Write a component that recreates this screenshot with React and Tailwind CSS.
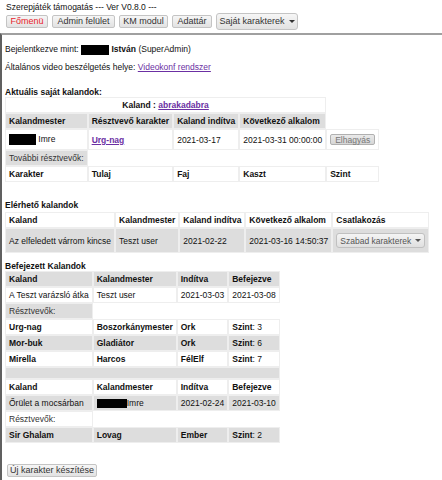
import React from "react";

const font = { fontFamily: '"Liberation Sans", Arial, sans-serif' };

function Btn({ children, className = "" }) {
  return (
    <button
      className={`flex items-center justify-center rounded-[2px] border border-[#c4c4c4] bg-gradient-to-b from-[#f6f6f6] to-[#e2e2e2] text-[9px] leading-none text-[#333] ${className}`}
    >
      {children}
    </button>
  );
}

function Caret() {
  return <span className="ml-[4px] inline-block h-0 w-0 border-x-[3px] border-t-[3px] border-x-transparent border-t-[#333]" />;
}

function Td({ children, className = "", ...rest }) {
  return (
    <td
      className={`border border-[#eeeeee] px-[3px] py-[2px] align-middle leading-[10px] whitespace-nowrap ${className}`}
      {...rest}
    >
      {children}
    </td>
  );
}

function Redacted({ className = "" }) {
  return <span className={`inline-block bg-black align-middle ${className}`} />;
}

function Link({ children, bold }) {
  return <a className={`text-[#6b2fa3] underline ${bold ? "font-bold" : ""}`}>{children}</a>;
}

export default function App() {
  return (
    <div style={font} className="w-[442px] h-[480px] overflow-hidden bg-white text-[8.5px] text-[#111]">
      <div className="pt-[2px] pl-[6px]">
        <div className="leading-[11px]">Szerepjáték támogatás --- Ver V0.8.0 ---</div>
        <div className="flex h-[17px] items-center gap-[4px]">
          <Btn className="h-[13px] w-[42px] !text-[#e8222b]">Főmenü</Btn>
          <Btn className="h-[13px] w-[63px]">Admin felület</Btn>
          <Btn className="h-[13px] w-[49px]">KM modul</Btn>
          <Btn className="h-[13px] w-[40px]">Adattár</Btn>
          <Btn className="h-[17px] w-[82px] rounded-[3px]">
            Saját karakterek
            <Caret />
          </Btn>
        </div>
      </div>

      <div className="mt-[3px] h-[450px] border-t-2 border-l-2 border-t-[#a0a0a0] border-l-[#606060] pl-[3px]">
        <p className="mt-[8px] leading-[12px]">
          Bejelentkezve mint: <Redacted className="h-[10px] w-[28px]" /> <b>István</b> (SuperAdmin)
        </p>
        <p className="mt-[6px] leading-[12px]">
          Általános video beszélgetés helye: <Link>Videokonf rendszer</Link>
        </p>

        <div className="mt-[14px] font-bold leading-[10px]">Aktuális saját kalandok:</div>
        <table className="w-[370px] border-separate border-spacing-0">
          <tbody>
            <tr>
              <Td colSpan={4} className="text-center font-bold">
                Kaland : <Link bold>abrakadabra</Link>
              </Td>
            </tr>
            <tr className="bg-[#dddddd] font-bold">
              <Td className="w-[82px]">Kalandmester</Td>
              <Td className="w-[83px]">Résztvevő karakter</Td>
              <Td className="w-[65px]">Kaland indítva</Td>
              <Td className="w-[86px]">Következő alkalom</Td>
            </tr>
            <tr>
              <Td className="h-[21px]">
                <Redacted className="h-[11px] w-[27px]" /> Imre
              </Td>
              <Td>
                <Link bold>Urg-nag</Link>
              </Td>
              <Td>2021-03-17</Td>
              <Td>2021-03-31 00:00:00</Td>
              <Td className="w-[54px]">
                <button className="flex h-[11px] w-[45px] items-center justify-center rounded-[2px] border border-[#b0b0b0] bg-gradient-to-b from-[#eaeaea] to-[#d6d6d6] text-[8.5px] text-[#777]">
                  Elhagyás
                </button>
              </Td>
            </tr>
            <tr>
              <Td className="bg-[#dddddd] text-[#333]">További résztvevők:</Td>
            </tr>
            <tr className="font-bold">
              <Td>Karakter</Td>
              <Td>Tulaj</Td>
              <Td>Faj</Td>
              <Td>Kaszt</Td>
              <Td>Szint</Td>
            </tr>
          </tbody>
        </table>

        <div className="mt-[18px] font-bold leading-[10px]">Elérhető kalandok</div>
        <table className="mt-[2px] w-[422px] border-separate border-spacing-0">
          <tbody>
            <tr className="font-bold">
              <Td className="h-[15px] w-[110px]">Kaland</Td>
              <Td className="w-[63px]">Kalandmester</Td>
              <Td className="w-[64px]">Kaland indítva</Td>
              <Td className="w-[86px]">Következő alkalom</Td>
              <Td>Csatlakozás</Td>
            </tr>
            <tr className="bg-[#dddddd]">
              <Td className="h-[25px]">Az elfeledett várrom kincse</Td>
              <Td>Teszt user</Td>
              <Td>2021-02-22</Td>
              <Td>2021-03-16 14:50:37</Td>
              <Td>
                <button className="flex h-[15px] w-[89px] items-center justify-center rounded-[3px] border border-[#c0c0c0] bg-gradient-to-b from-[#f4f4f4] to-[#e0e0e0] text-[8.5px] text-[#555]">
                  Szabad karakterek
                  <span className="ml-[4px] inline-block h-0 w-0 border-x-[3px] border-t-[3px] border-x-transparent border-t-[#555]" />
                </button>
              </Td>
            </tr>
          </tbody>
        </table>

        <div className="mt-[8px] font-bold leading-[10px]">Befejezett Kalandok</div>
        <table className="w-[269px] border-separate border-spacing-0">
          <tbody>
            <tr className="bg-[#dddddd] font-bold">
              <Td className="w-[86px]">Kaland</Td>
              <Td className="w-[82px]">Kalandmester</Td>
              <Td className="w-[50px]">Indítva</Td>
              <Td>Befejezve</Td>
            </tr>
            <tr>
              <Td>A Teszt varázsló átka</Td>
              <Td>Teszt user</Td>
              <Td>2021-03-03</Td>
              <Td>2021-03-08</Td>
            </tr>
            <tr>
              <Td className="bg-[#dddddd] text-[#333]">Résztvevők:</Td>
            </tr>
            <tr className="font-bold">
              <Td>Urg-nag</Td>
              <Td>Boszorkánymester</Td>
              <Td>Ork</Td>
              <Td>
                Szint<span className="font-normal">: 3</span>
              </Td>
            </tr>
            <tr className="bg-[#dddddd] font-bold">
              <Td>Mor-buk</Td>
              <Td>Gladiátor</Td>
              <Td>Ork</Td>
              <Td>
                Szint<span className="font-normal">: 6</span>
              </Td>
            </tr>
            <tr className="font-bold">
              <Td>Mirella</Td>
              <Td>Harcos</Td>
              <Td>FélElf</Td>
              <Td>
                Szint<span className="font-normal">: 7</span>
              </Td>
            </tr>
            <tr className="bg-[#dddddd]">
              <Td colSpan={4} className="h-[12px]" />
            </tr>
            <tr className="font-bold">
              <Td>Kaland</Td>
              <Td>Kalandmester</Td>
              <Td>Indítva</Td>
              <Td>Befejezve</Td>
            </tr>
            <tr className="bg-[#dddddd]">
              <Td>Őrület a mocsárban</Td>
              <Td>
                <Redacted className="h-[9px] w-[30px]" />
                Imre
              </Td>
              <Td>2021-02-24</Td>
              <Td>2021-03-10</Td>
            </tr>
            <tr>
              <Td className="text-[#333]">Résztvevők:</Td>
            </tr>
            <tr className="bg-[#dddddd] font-bold">
              <Td>Sir Ghalam</Td>
              <Td>Lovag</Td>
              <Td>Ember</Td>
              <Td>
                Szint<span className="font-normal">: 2</span>
              </Td>
            </tr>
          </tbody>
        </table>

        <Btn className="mt-[21px] ml-[2px] h-[13px] w-[90px]">Új karakter készítése</Btn>
      </div>
    </div>
  );
}
